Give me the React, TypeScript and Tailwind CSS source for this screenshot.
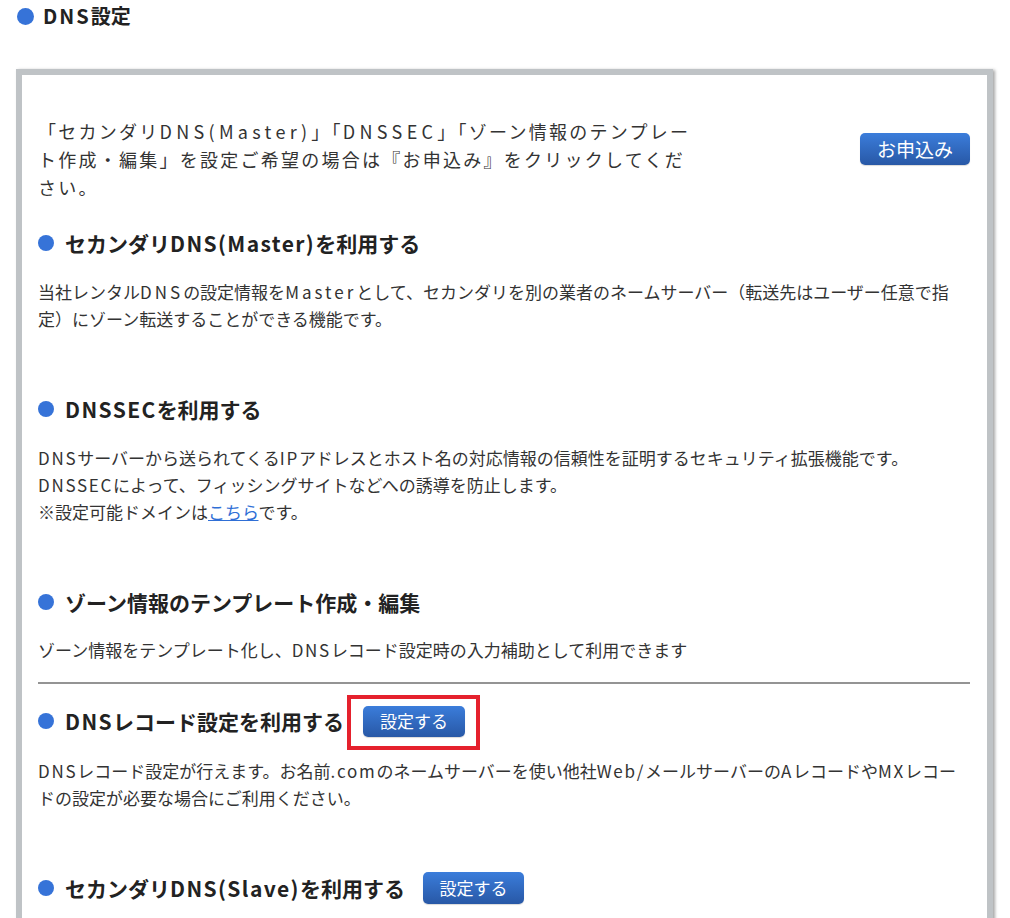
import React from "react";

const font = { fontFamily: '"Noto Sans CJK JP", "Noto Sans", sans-serif' };

function Dot({ className = "" }: { className?: string }) {
  return <span className={"inline-block h-[16px] w-[16px] shrink-0 rounded-full bg-[#3673d8] " + className} />;
}

function L({ children }: { children: React.ReactNode }) {
  return <span className="tracking-[1.7px]">{children}</span>;
}

function LW({ children }: { children: React.ReactNode }) {
  return <span className="tracking-[3px]">{children}</span>;
}

function HL({ children }: { children: React.ReactNode }) {
  return <span className="tracking-[1.4px]">{children}</span>;
}

function IL({ children }: { children: React.ReactNode }) {
  return <span className="tracking-[4.3px]">{children}</span>;
}

function Btn({ children, className = "" }: { children: React.ReactNode; className?: string }) {
  return (
    <button
      className={
        "flex items-center justify-center rounded-[5px] bg-gradient-to-b from-[#3b7ddb] to-[#2858a6] text-white shadow-[0_1px_1px_rgba(0,0,0,0.15)] " +
        className
      }
    >
      {children}
    </button>
  );
}

function Heading({ children, extra }: { children: React.ReactNode; extra?: React.ReactNode }) {
  return (
    <div className="flex h-[30px] items-center">
      <Dot />
      <h3 className="ml-[11px] text-[21px] font-bold leading-[30px] text-[#222]">{children}</h3>
      {extra}
    </div>
  );
}

export default function App() {
  return (
    <div className="min-h-[918px] bg-white text-[#333]" style={font}>
      <div className="flex h-[32px] items-center pl-[17px]">
        <Dot className="h-[17px] w-[17px]" />
        <h2 className="ml-[9px] text-[20px] font-bold leading-[32px] text-[#222]">
          <span className="tracking-[2px]">DNS</span>設定
        </h2>
      </div>
      <div className="ml-[16px] mt-[37px] w-[977px] border-[6px] border-[#bfc3c6] bg-white pb-[40px] pl-[16px] pr-[17px] pt-[42px] shadow-[2px_1px_3px_rgba(0,0,0,0.35)]">
        <div className="flex items-start justify-between">
          <p className="w-[655px] text-[18px] leading-[28px] tracking-[2.25px] text-[#333]">
            「セカンダリ<IL>DNS(Master)</IL>」「<IL>DNSSEC</IL>」「ゾーン情報のテンプレート作成・編集」を設定ご希望の場合は『お申込み』をクリックしてください。
          </p>
          <Btn className="mt-[16px] h-[32px] w-[110px] text-[19px]">お申込み</Btn>
        </div>

        <div className="mt-[27px]">
          <Heading>
            セカンダリ<HL>DNS(Master)</HL>を利用する
          </Heading>
          <p className="mt-[20px] text-[17px] leading-[27px]">
            当社レンタル<LW>DNS</LW>の設定情報を<LW>Master</LW>として、セカンダリを別の業者のネームサーバー（転送先はユーザー任意で指定）にゾーン転送することができる機能です。
          </p>
        </div>

        <div className="mt-[62px]">
          <Heading>
            <HL>DNSSEC</HL>を利用する
          </Heading>
          <p className="mt-[20px] text-[17px] leading-[27px]">
            <L>DNS</L>サーバーから送られてくる<L>IP</L>アドレスとホスト名の対応情報の信頼性を証明するセキュリティ拡張機能です。
            <br />
            <L>DNSSEC</L>によって、フィッシングサイトなどへの誘導を防止します。
            <br />
            ※設定可能ドメインは<a className="text-[#2f6fd6] underline">こちら</a>です。
          </p>
        </div>

        <div className="mt-[62px]">
          <Heading>ゾーン情報のテンプレート作成・編集</Heading>
          <p className="mt-[19px] text-[17px] leading-[27px]">
            ゾーン情報をテンプレート化し、<L>DNS</L>レコード設定時の入力補助として利用できます
          </p>
        </div>

        <div className="mt-[19px] h-[2px] bg-[#949494]" />

        <div className="mt-[22px]">
          <Heading
            extra={
              <div className="relative ml-[19px]">
                <Btn className="h-[31px] w-[102px] text-[17px]">設定する</Btn>
                <div className="pointer-events-none absolute left-[-16px] top-[-11px] h-[55px] w-[133px] border-[4px] border-[#e5212d]" />
              </div>
            }
          >
            <HL>DNS</HL>レコード設定を利用する
          </Heading>
          <p className="mt-[21px] text-[17px] leading-[27px]">
            <L>DNS</L>レコード設定が行えます。お名前<L>.com</L>のネームサーバーを使い他社<L>Web/</L>メールサーバーの<L>A</L>レコードや<L>MX</L>レコードの設定が必要な場合にご利用ください。
          </p>
        </div>

        <div className="mt-[62px]">
          <Heading extra={<Btn className="ml-[18px] h-[32px] w-[101px] text-[17px]">設定する</Btn>}>
            セカンダリ<HL>DNS(Slave)</HL>を利用する
          </Heading>
        </div>
      </div>
    </div>
  );
}
